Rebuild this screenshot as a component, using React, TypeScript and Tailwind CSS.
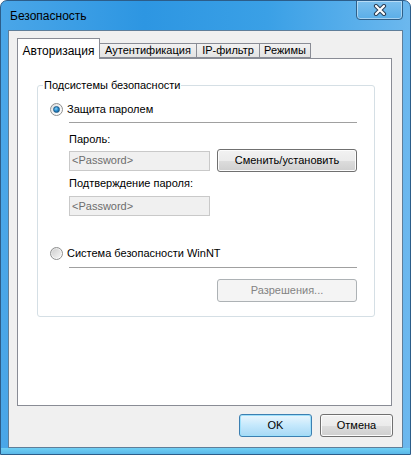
import React from "react";

const font = { fontFamily: '"Liberation Sans", Arial, sans-serif' };

function Radio({ checked }: { checked?: boolean }) {
  return (
    <div className="relative w-[13px] h-[13px] rounded-full border border-[#8e8f8f] bg-gradient-to-br from-[#dcdcdc] via-[#f4f4f4] to-[#ffffff] shrink-0">
      {checked ? (
        <div className="absolute left-[2px] top-[2px] w-[7px] h-[7px] rounded-full bg-[radial-gradient(circle_at_40%_35%,#8ad3f8_0%,#2a8fd0_45%,#0d4a7a_100%)] border border-[#1f5c8a]" />
      ) : (
        <div className="absolute left-[1px] top-[1px] w-[9px] h-[9px] rounded-full bg-gradient-to-br from-[#cfcfcf] to-[#f6f6f6]" />
      )}
    </div>
  );
}

function Btn({ children, w, disabled, primary }: { children: React.ReactNode; w: string; disabled?: boolean; primary?: boolean }) {
  const base = "flex items-center justify-center h-[23px] rounded-[3px] border text-[11px]";
  if (disabled)
    return <div className={`${base} ${w} border-[#adb2b5] bg-[#f4f4f4] text-[#838383]`}>{children}</div>;
  if (primary)
    return (
      <div className={`${base} ${w} border-[#3c7fb1] bg-gradient-to-b from-[#eaf6fd] via-[#c4e8fc] to-[#a7d9f5] text-black shadow-[inset_0_0_0_1px_#9ee0fb]`}>
        {children}
      </div>
    );
  return (
    <div className={`${base} ${w} border-[#707070] bg-[linear-gradient(#f2f2f2_0%,#ebebeb_50%,#dddddd_51%,#cfcfcf_100%)] text-black shadow-[inset_0_0_0_1px_#fcfcfc]`}>
      {children}
    </div>
  );
}

function Field() {
  return (
    <div className="w-[141px] h-[20px] border border-[#c9c9c9] bg-[#f0f0f0] text-[#6d6d6d] text-[11px] flex items-center pl-[2px]">
      &lt;Password&gt;
    </div>
  );
}

export default function App() {
  return (
    <div
      style={font}
      className="w-[411px] h-[455px] rounded-t-[7px] border border-[#2c5d8a] bg-[linear-gradient(90deg,#4aa6e8_0%,#2d96e2_35%,#3aa0e6_65%,#6cb8ee_100%)] flex flex-col relative overflow-hidden"
    >
      {/* title bar */}
      <div className="h-[29px] flex items-center pl-[9px] text-[12px] text-black">Безопасность</div>
      <div className="absolute top-[-1px] right-[7px] w-[47px] h-[20px] rounded-b-[4px] border border-[#2f5f88] bg-gradient-to-b from-[#7cc0ee] to-[#5aaee8] shadow-[inset_0_0_0_1px_rgba(255,255,255,0.45)] flex items-center justify-center">
        <svg width="14" height="12" viewBox="0 0 14 12">
          <path d="M3 2 L11 10 M11 2 L3 10" stroke="#2b3e55" strokeWidth="4.2" strokeLinecap="round" />
          <path d="M3 2 L11 10 M11 2 L3 10" stroke="#ffffff" strokeWidth="2.2" strokeLinecap="round" />
        </svg>
      </div>

      {/* client */}
      <div className="mx-[7px] h-[418px] border border-[#5f7e99] bg-[#f0f0f0] flex flex-col pl-[8px] pt-[7px] text-[11px] text-black">
        {/* tabs */}
        <div className="flex items-end h-[20px] relative z-10">
          <div className="h-[21px] -mb-px w-[83px] border border-b-0 border-[#898c95] bg-white flex items-start justify-center pt-[3px] text-[12px]">
            Авторизация
          </div>
          <div className="h-[15px] w-[97px] border border-l-0 border-[#898c95] bg-gradient-to-b from-[#f2f2f2] to-[#e3e3e3] flex items-center justify-center">
            Аутентификация
          </div>
          <div className="h-[15px] w-[63px] border border-l-0 border-[#898c95] bg-gradient-to-b from-[#f2f2f2] to-[#e3e3e3] flex items-center justify-center">
            IP-фильтр
          </div>
          <div className="h-[15px] w-[51px] border border-l-0 border-[#898c95] bg-gradient-to-b from-[#f2f2f2] to-[#e3e3e3] flex items-center justify-center">
            Режимы
          </div>
        </div>

        {/* panel */}
        <div className="w-[375px] h-[348px] border border-[#898c95] bg-white">
          <div className="relative ml-[19px] mt-[26px] w-[338px] h-[232px] rounded-[3px] border border-[#d5dfe5] flex flex-col">
            <div className="absolute -top-[8px] left-[5px] bg-white px-px leading-[15px]">Подсистемы безопасности</div>

            <div className="mt-[17px] ml-[12px] flex items-center h-[13px] gap-[4px]">
              <Radio checked />
              <span>Защита паролем</span>
            </div>
            <div className="mt-[6px] ml-[31px] w-[288px] h-px bg-[#a0a0a0]" />
            <div className="mt-[9px] ml-[31px] leading-[15px]">Пароль:</div>
            <div className="mt-[2px] ml-[31px] flex items-center gap-[7px] h-[23px]">
              <Field />
              <Btn w="w-[140px]">Сменить/установить</Btn>
            </div>
            <div className="mt-[4px] ml-[31px] leading-[15px]">Подтверждение пароля:</div>
            <div className="mt-[5px] ml-[31px]">
              <Field />
            </div>

            <div className="mt-[31px] ml-[12px] flex items-center h-[13px] gap-[4px]">
              <Radio />
              <span>Система безопасности WinNT</span>
            </div>
            <div className="mt-[7px] ml-[31px] w-[288px] h-px bg-[#a0a0a0]" />
            <div className="mt-[11px] ml-[179px]">
              <Btn w="w-[140px]" disabled>
                Разрешения...
              </Btn>
            </div>
          </div>
        </div>

        {/* bottom buttons */}
        <div className="mt-[8px] w-[376px] flex justify-end gap-[8px]">
          <Btn w="w-[73px]" primary>
            OK
          </Btn>
          <Btn w="w-[73px]">Отмена</Btn>
        </div>
      </div>
      <div className="flex-1 bg-gradient-to-b from-[#6fcff4] to-[#5ab8e8]" />
    </div>
  );
}
